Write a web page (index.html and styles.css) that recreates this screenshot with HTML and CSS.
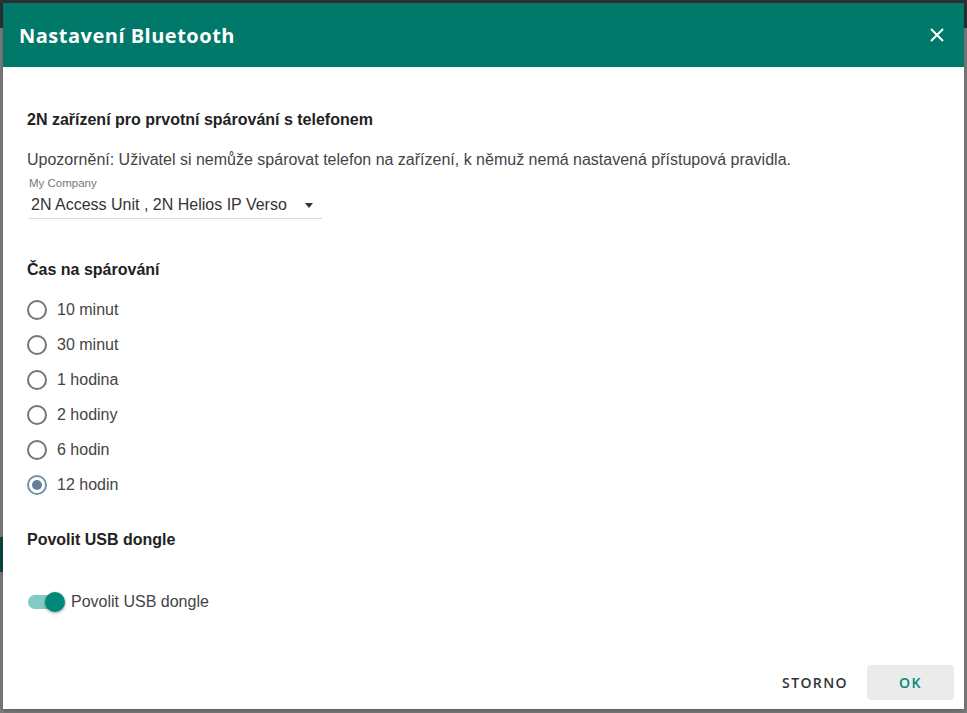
FILE: index.html
```html
<!DOCTYPE html>
<html lang="cs">
<head>
    <meta charset="UTF-8">
    <title>Nastavení Bluetooth</title>
    <link rel="stylesheet" href="styles.css">
</head>
<body>
<div class="app">
    <div class="app-bar"></div>
    <div class="app-page">
        <div class="app-button"></div>
    </div>
</div>

<div class="dialog">
    <div class="dialog-head">
        <h1 class="dialog-title">Nastavení Bluetooth</h1>
        <button class="dialog-close" type="button" aria-label="Zavřít">
            <svg width="14" height="14" viewBox="0 0 14 14">
                <path d="M1 1 L13 13 M13 1 L1 13" stroke="#fff" stroke-width="2" fill="none"/>
            </svg>
        </button>
    </div>

    <div class="dialog-body">
        <h2 class="section-title">2N zařízení pro prvotní spárování s telefonem</h2>
        <p class="note">Upozornění: Uživatel si nemůže spárovat telefon na zařízení, k němuž nemá nastavená přístupová pravidla.</p>
        <div class="field">
            <label class="field-label">My Company</label>
            <div class="select">
                <span class="select-value">2N Access Unit , 2N Helios IP Verso</span>
                <span class="select-arrow"></span>
            </div>
        </div>

        <h2 class="section-title section-gap">Čas na spárování</h2>
        <div class="radios">
            <label class="radio"><span class="radio-dot"></span>10 minut</label>
            <label class="radio"><span class="radio-dot"></span>30 minut</label>
            <label class="radio"><span class="radio-dot"></span>1 hodina</label>
            <label class="radio"><span class="radio-dot"></span>2 hodiny</label>
            <label class="radio"><span class="radio-dot"></span>6 hodin</label>
            <label class="radio checked"><span class="radio-dot"></span>12 hodin</label>
        </div>

        <h2 class="section-title usb-title">Povolit USB dongle</h2>
        <label class="switch">
            <span class="switch-track"><span class="switch-thumb"></span></span>
            Povolit USB dongle
        </label>
    </div>

    <div class="dialog-foot">
        <button class="btn" type="button">STORNO</button>
        <button class="btn btn-ok" type="button">OK</button>
    </div>
</div>
</body>
</html>
```

FILE: styles.css
```css
body, h1, h2, p {
    margin: 0;
    padding: 0;
}

body {
    font-family: "Liberation Sans", Arial, sans-serif;
    background: #7f7f7f;
    overflow: hidden;
}

.app-bar {
    height: 28px;
    background: #2e3134;
}

.app-page {
    height: 685px;
    padding-top: 509px;
    box-sizing: border-box;
}

.app-button {
    width: 40px;
    height: 35px;
    background: #0b4a42;
}

.dialog {
    position: absolute;
    top: 3px;
    left: 3px;
    width: 961px;
    height: 706px;
    background: #fff;
    display: flex;
    flex-direction: column;
    box-shadow: 0 2px 6px rgba(0, 0, 0, 0.3);
}

.dialog-head {
    height: 64px;
    background: #00796b;
    display: flex;
    align-items: center;
    justify-content: space-between;
    padding: 0 20px 0 16px;
}

.dialog-title {
    color: #fff;
    font-family: "Open Sans", sans-serif;
    font-size: 20px;
    font-weight: 700;
    letter-spacing: 0.5px;
}

.dialog-close {
    background: none;
    border: none;
    padding: 0;
    width: 14px;
    height: 14px;
    display: flex;
}

.dialog-body {
    padding: 43px 24px 0 24px;
    color: #333;
}

.section-title {
    font-size: 16px;
    line-height: 20px;
    font-weight: bold;
    color: #222;
}

.note {
    margin-top: 20px;
    font-size: 16px;
    line-height: 20px;
    color: #444;
}

.field {
    margin: 6px 0 0 2px;
    width: 293px;
}

.field-label {
    display: block;
    font-size: 11.5px;
    line-height: 14px;
    color: #777;
}

.select {
    display: flex;
    align-items: center;
    justify-content: space-between;
    padding: 5px 9px 3px 2px;
    border-bottom: 1px solid #d6d6d6;
    font-size: 16px;
    line-height: 20px;
    color: #333;
}

.select-arrow {
    width: 0;
    height: 0;
    border-left: 4.5px solid transparent;
    border-right: 4.5px solid transparent;
    border-top: 5px solid #333;
}

.section-gap {
    margin-top: 41px;
}

.radios {
    margin-top: 12px;
}

.radio {
    display: flex;
    align-items: center;
    height: 35px;
    font-size: 16px;
    color: #444;
}

.radio-dot {
    width: 20px;
    height: 20px;
    border: 2px solid #757575;
    border-radius: 50%;
    box-sizing: border-box;
    margin-right: 10px;
    display: flex;
    align-items: center;
    justify-content: center;
}

.radio.checked .radio-dot {
    border-color: #7890a0;
}

.radio.checked .radio-dot::after {
    content: "";
    width: 10px;
    height: 10px;
    border-radius: 50%;
    background: #62809a;
}

.usb-title {
    margin-top: 28px;
}

.switch {
    margin-top: 34px;
    display: flex;
    align-items: center;
    height: 36px;
    font-size: 16px;
    color: #444;
}

.switch-track {
    position: relative;
    width: 34px;
    height: 14px;
    margin: 0 9px 0 1px;
    border-radius: 7px;
    background: #80cbc4;
}

.switch-thumb {
    position: absolute;
    right: -3px;
    top: -3px;
    width: 20px;
    height: 20px;
    border-radius: 50%;
    background: #00897b;
    box-shadow: 0 1px 3px rgba(0, 0, 0, 0.4);
}

.dialog-foot {
    margin-top: auto;
    display: flex;
    justify-content: flex-end;
    gap: 3px;
    padding: 0 10px 9px 0;
}

.btn {
    height: 35px;
    padding: 0 16px;
    border: none;
    border-radius: 4px;
    background: none;
    font-family: "Open Sans", sans-serif;
    font-size: 14px;
    font-weight: 600;
    letter-spacing: 1.4px;
    color: #333;
}

.btn-ok {
    width: 87px;
    background: #ebebeb;
    color: #00897b;
}
```
